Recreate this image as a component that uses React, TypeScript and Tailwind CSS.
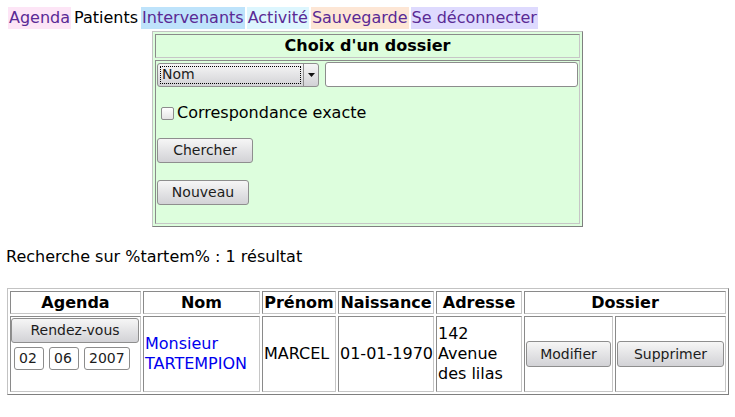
import { memo } from "react";

const outset = "border border-t-[#c3c3c3] border-l-[#c3c3c3] border-r-[#7f7f7f] border-b-[#7f7f7f]";
const inset = "border border-t-[#8a8a8a] border-l-[#8a8a8a] border-r-[#c6c6c6] border-b-[#c6c6c6]";
const btn =
  "flex items-center justify-center rounded-[3px] border border-[#8e8e8e] bg-linear-to-b from-[#f6f6f6] to-[#d2d2d6] text-[14px] text-[#1c1c1c]";
const field = "flex items-center rounded-[3px] border border-[#8c8c8c] bg-white text-[14px] text-[#1c1c1c]";

const navItems = [
  { label: "Agenda", bg: "bg-[#fde5f6]", current: false },
  { label: "Patients", bg: "", current: true },
  { label: "Intervenants", bg: "bg-[#bee3fb]", current: false },
  { label: "Activité", bg: "bg-[#ddf6fe]", current: false },
  { label: "Sauvegarde", bg: "bg-[#fde6d5]", current: false },
  { label: "Se déconnecter", bg: "bg-[#dedafe]", current: false },
];

const Nav = memo(function Nav() {
  return (
    <nav className="flex h-[22px] gap-[2px] pl-[8px]">
      {navItems.map((n) => (
        <span
          key={n.label}
          className={`px-px leading-[22px] ${n.bg} ${n.current ? "text-black" : "text-[#5a2a95]"}`}
        >
          {n.label}
        </span>
      ))}
    </nav>
  );
});

function SearchBox() {
  return (
    <div className={`mx-auto mt-[2px] flex w-[431px] flex-col gap-[2px] bg-[#ddfedd] p-[2px] ${outset}`}>
      <div className={`flex h-[24px] items-center justify-center font-bold ${inset}`}>Choix d'un dossier</div>
      <div className={`h-[164px] ${inset}`}>
        <div className="ml-px mt-px flex h-[25px] items-center">
          <div className={`flex h-[24px] w-[162px] ${btn} justify-start`}>
            <div className="m-[2px] flex flex-1 items-center self-stretch border border-dotted border-black pl-px">Nom</div>
            <div className="flex w-[15px] items-center justify-center self-stretch border-l border-[#8e8e8e]">
              <svg width="7" height="4" viewBox="0 0 7 4">
                <path d="M0 0h7L3.5 4z" fill="#111" />
              </svg>
            </div>
          </div>
          <div className={`ml-[6px] h-[25px] w-[253px] ${field}`} />
        </div>
        <div className="mt-[15px] flex h-[22px] items-center pl-[5px]">
          <span className="h-[13px] w-[13px] rounded-[2px] border border-[#8c8c8c] bg-linear-to-b from-white to-[#e4e4e4]" />
          <span className="ml-[3px] leading-[22px]">Correspondance exacte</span>
        </div>
        <button className={`ml-px mt-[14px] h-[25px] w-[96px] ${btn}`}>Chercher</button>
        <button className={`ml-px mt-[17px] h-[25px] w-[92px] ${btn}`}>Nouveau</button>
      </div>
    </div>
  );
}

function Results() {
  const heads = ["Agenda", "Nom", "Prénom", "Naissance", "Adresse"];
  return (
    <div
      className={`ml-[7px] mt-[22px] grid w-[722px] grid-cols-[131px_117px_74px_96px_86px_89px_111px] grid-rows-[23px_76px] gap-[2px] p-[2px] ${outset}`}
    >
      {heads.map((h) => (
        <div key={h} className={`flex items-center justify-center font-bold ${inset}`}>
          {h}
        </div>
      ))}
      <div className={`col-span-2 flex items-center justify-center font-bold ${inset}`}>Dossier</div>

      <div className={`flex flex-col items-start ${inset}`}>
        <button className={`mt-px h-[25px] w-[128px] ${btn}`}>Rendez-vous</button>
        <div className="mt-[4px] flex gap-[5px] pl-[3px]">
          <div className={`h-[23px] w-[30px] pl-[4px] ${field}`}>02</div>
          <div className={`h-[23px] w-[30px] pl-[4px] ${field}`}>06</div>
          <div className={`h-[23px] w-[46px] pl-[4px] ${field}`}>2007</div>
        </div>
      </div>
      <div className={`flex items-center pl-px leading-[20px] text-[#0000ee] ${inset}`}>
        <span>
          Monsieur
          <br />
          TARTEMPION
        </span>
      </div>
      <div className={`flex items-center pl-px ${inset}`}>MARCEL</div>
      <div className={`flex items-center pl-px ${inset}`}>01-01-1970</div>
      <div className={`flex items-center pl-px leading-[20px] ${inset}`}>
        <span>
          142
          <br />
          Avenue
          <br />
          des lilas
        </span>
      </div>
      <div className={`flex items-center justify-center ${inset}`}>
        <button className={`h-[26px] w-[85px] ${btn}`}>Modifier</button>
      </div>
      <div className={`flex items-center justify-center ${inset}`}>
        <button className={`h-[26px] w-[107px] ${btn}`}>Supprimer</button>
      </div>
    </div>
  );
}

export default function App() {
  return (
    <div className="min-h-[417px] w-[735px] bg-white pt-[7px] font-['DejaVu_Sans',sans-serif] text-[16px] text-black">
      <Nav />
      <SearchBox />
      <p className="mt-[20px] pl-[6px] leading-[19px]">Recherche sur %tartem% : 1 résultat</p>
      <Results />
    </div>
  );
}
